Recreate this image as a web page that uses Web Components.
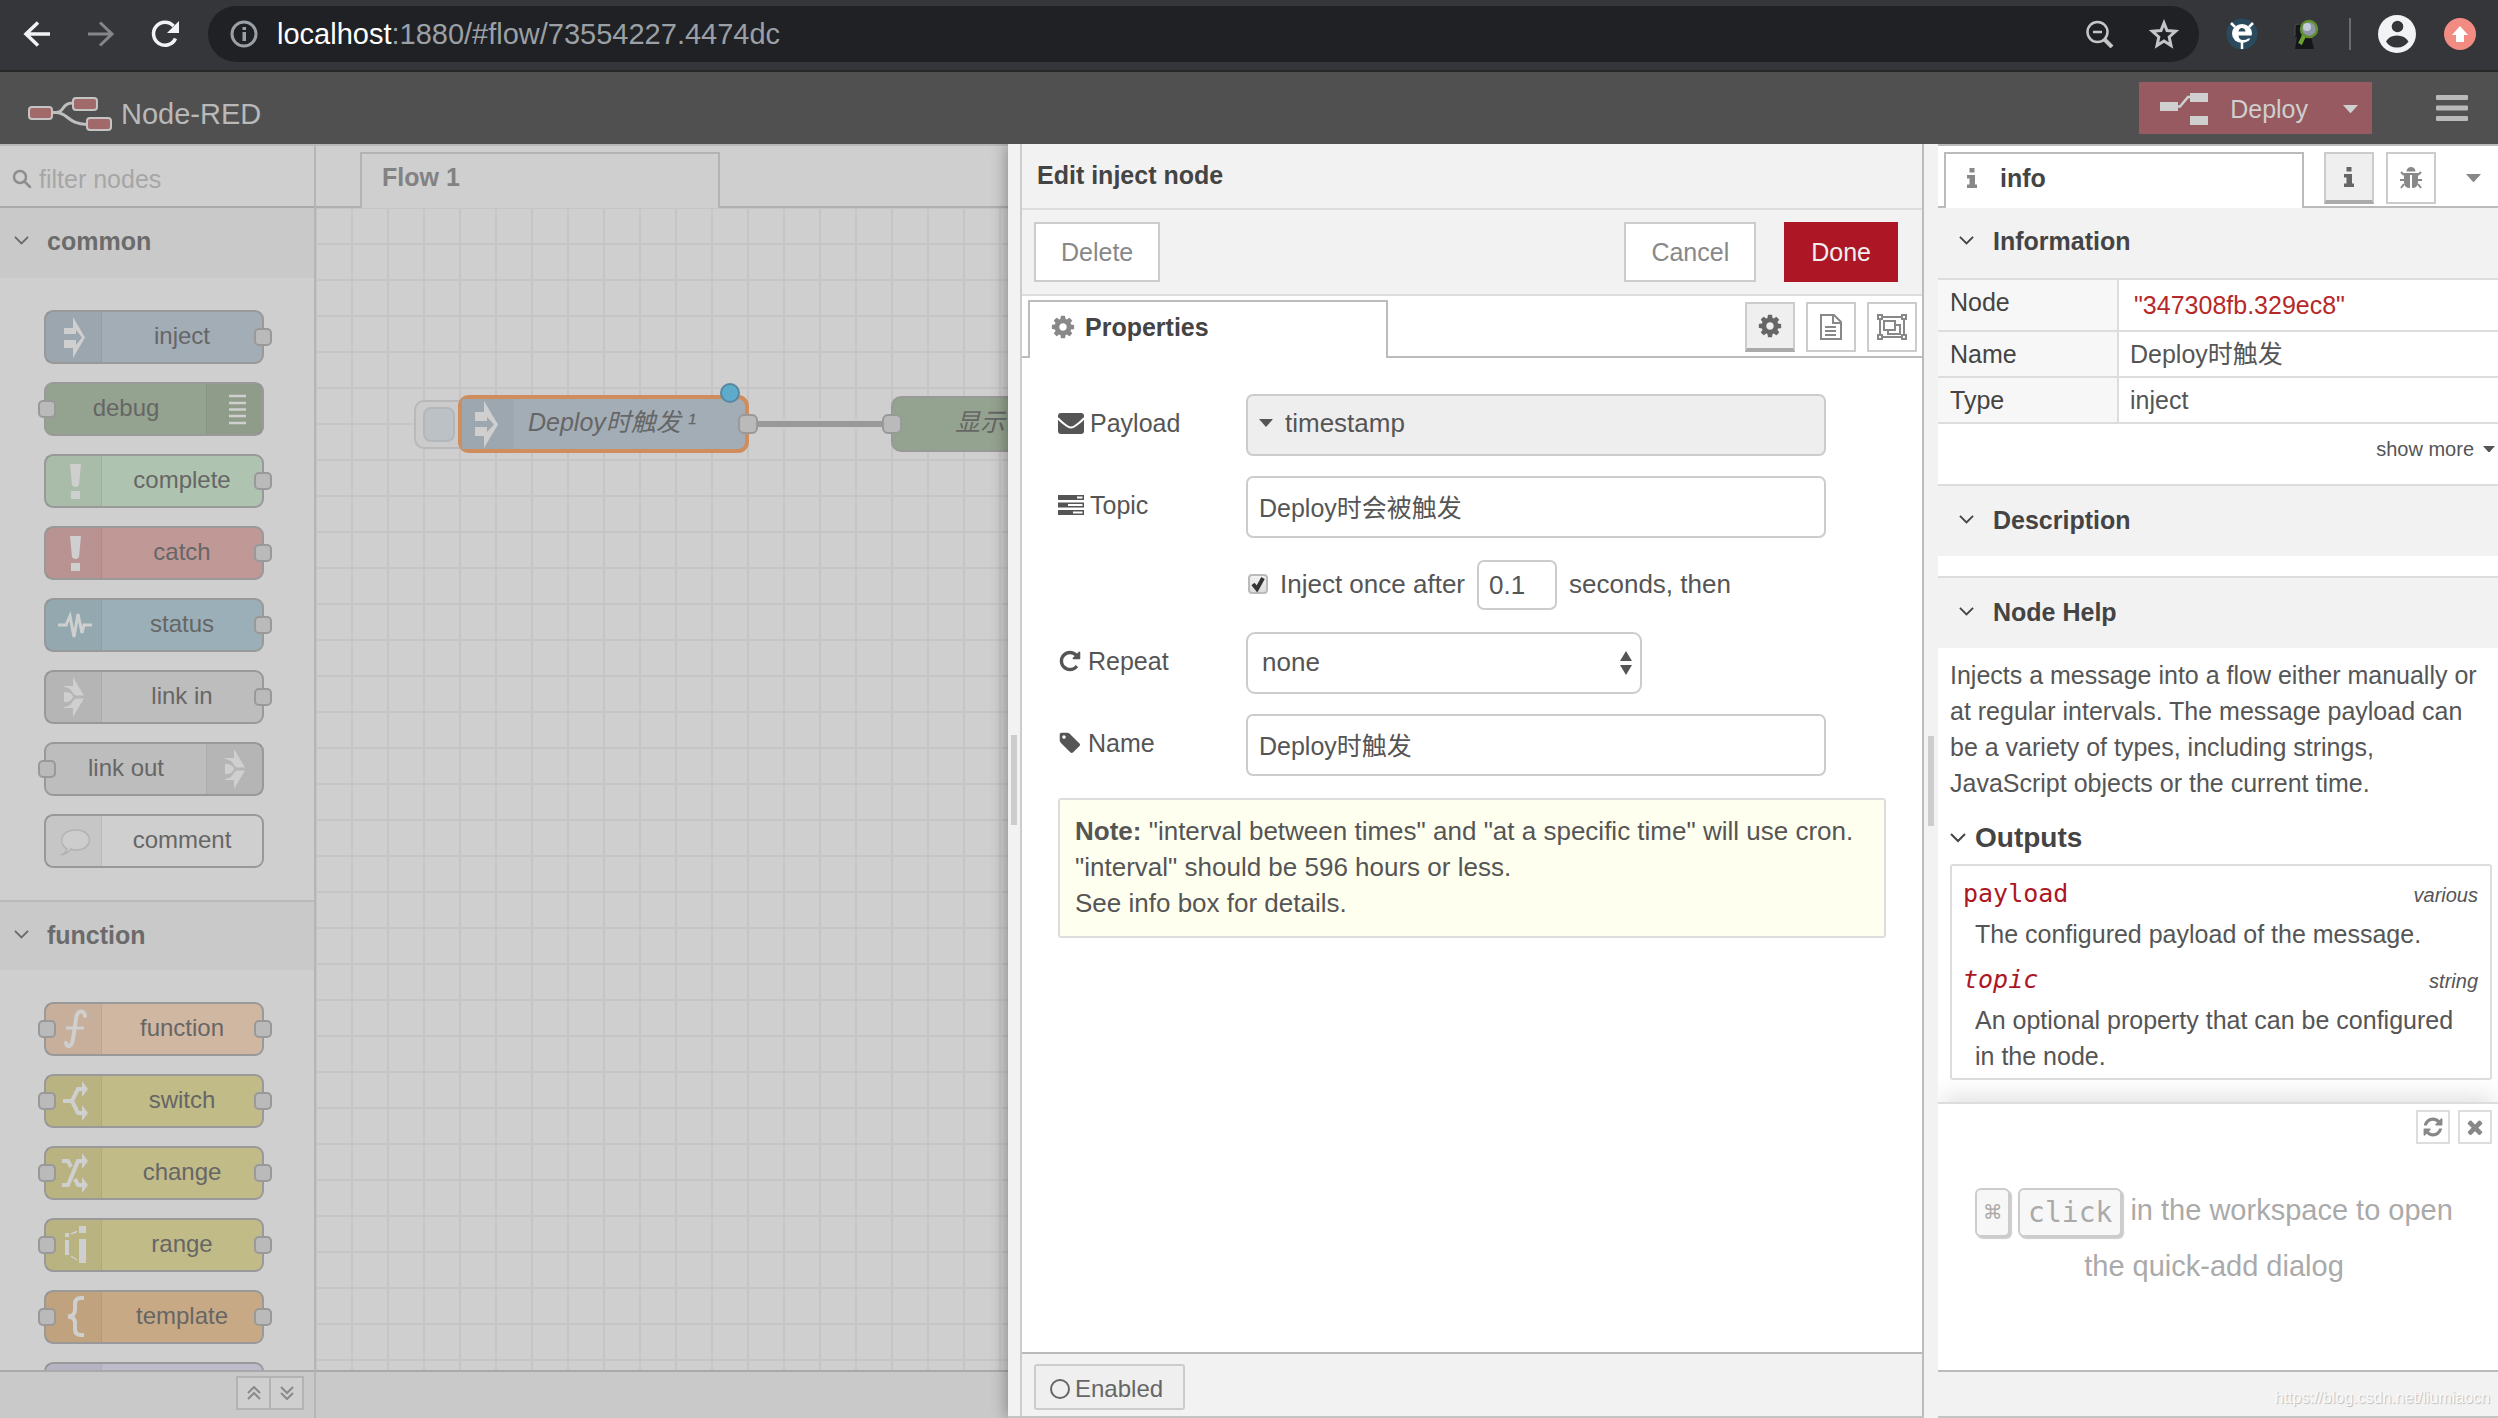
<!DOCTYPE html>
<html lang="en">
<head>
<meta charset="utf-8">
<title>Node-RED</title>
<style>
html,body{margin:0;height:100%}
body{font:25px/36px "Liberation Sans","Noto Sans CJK SC",sans-serif;color:#555;overflow:hidden}
red-app{height:100vh}
</style>
</head>
<body>
<red-app></red-app>
<script>
const base = `*{box-sizing:border-box}button,input,select{font:inherit;color:inherit;margin:0}button{cursor:pointer;padding:0}svg{display:block}`;
function define(name, css, html, setup) {
  const t = document.createElement('template');
  t.innerHTML = `<style>${base}${css}</style>${html}`;
  customElements.define(name, class extends HTMLElement {
    constructor() { super(); this.attachShadow({mode: 'open'}).append(t.content.cloneNode(true)); }
    connectedCallback() { if (setup) setup(this, this.shadowRoot); }
  });
}

/* ---------- icons ---------- */
const fa = d => ['0 0 1792 1792', `<path fill="currentColor" d="${d}"/>`];
const icons = {
  cog: fa('M1152 896q0-106-75-181t-181-75-181 75-75 181 75 181 181 75 181-75 75-181zm512-109v222q0 12-8 23t-20 13l-185 28q-19 54-39 91 35 50 107 138 10 12 10 25t-9 23q-27 37-99 108t-94 71q-12 0-26-9l-138-108q-44 23-91 38-16 136-29 186-7 28-36 28h-222q-14 0-24.5-8.5t-11.5-21.5l-28-184q-49-16-90-37l-141 107q-10 9-25 9-14 0-25-11-126-114-165-168-7-10-7-23 0-12 8-23 15-21 51-66.5t54-70.5q-27-50-41-99l-183-27q-13-2-21-12.5t-8-23.5v-222q0-12 8-23t19-13l186-28q14-46 39-92-40-57-107-138-10-12-10-24 0-10 9-23 26-36 98.5-107.5t94.5-71.5q13 0 26 10l138 107q44-23 91-38 16-136 29-186 7-28 36-28h222q14 0 24.5 8.5t11.5 21.5l28 184q49 16 90 37l142-107q9-9 24-9 13 0 25 10 129 119 165 170 7 8 7 22 0 12-8 23-15 21-51 66.5t-54 70.5q26 50 41 98l183 28q13 2 21 12.5t8 23.5z'),
  repeat: fa('M1664 256v448q0 26-19 45t-45 19h-448q-42 0-59-40-17-39 14-69l138-138q-148-137-349-137-104 0-198.5 40.5t-163.5 109.5-109.5 163.5-40.5 198.5 40.5 198.5 109.5 163.5 163.5 109.5 198.5 40.5q119 0 225-52t179-147q7-10 23-12 15 0 25 9l137 138q9 8 9.5 20.5t-7.5 22.5q-109 132-264 204.5t-327 72.5q-156 0-298-61t-245-164-164-245-61-298 61-298 164-245 245-164 298-61q147 0 284.5 55.5t244.5 156.5l130-129q29-31 70-14 39 17 39 59z'),
  refresh: fa('M1639 1056q0 5-1 7-64 268-268 434.5t-478 166.5q-146 0-282.5-55t-243.5-157l-129 129q-19 19-45 19t-45-19-19-45v-448q0-26 19-45t45-19h448q26 0 45 19t19 45-19 45l-137 137q71 66 161 102t187 36q134 0 250-65t186-179q11-17 53-117 8-23 30-23h192q13 0 22.5 9.5t9.5 22.5zm25-800v448q0 26-19 45t-45 19h-448q-26 0-45-19t-19-45 19-45l138-138q-148-137-349-137-134 0-250 65t-186 179q-11 17-53 117-8 23-30 23h-199q-13 0-22.5-9.5t-9.5-22.5v-7q65-268 270-434.5t480-166.5q146 0 284 55.5t245 156.5l130-129q19-19 45-19t45 19 19 45z'),
  times: fa('M1490 1322q0 40-28 68l-136 136q-28 28-68 28t-68-28l-294-294-294 294q-28 28-68 28t-68-28l-136-136q-28-28-28-68t28-68l294-294-294-294q-28-28-28-68t28-68l136-136q28-28 68-28t68 28l294 294 294-294q28-28 68-28t68 28l136 136q28 28 28 68t-28 68l-294 294 294 294q28 28 28 68z'),
  tag: fa('M576 448q0-53-37.5-90.5t-90.5-37.5-90.5 37.5-37.5 90.5 37.5 90.5 90.5 37.5 90.5-37.5 37.5-90.5zm1067 576q0 53-37 90l-491 492q-39 37-91 37-53 0-90-37l-715-716q-38-37-64.5-101t-26.5-117v-416q0-52 38-90t90-38h416q53 0 117 26.5t102 64.5l715 714q37 39 37 91z'),
  envelope: ['0 0 26 22', '<path fill="currentColor" d="M3 1h20q3 0 3 3v15q0 3-3 3H3q-3 0-3-3V4q0-3 3-3z"/><path fill="none" stroke="#fff" stroke-width="2" d="M0 6q2 3 9 8 4 3 8 0 7-5 9-8"/>'],
  tasks: ['0 0 26 22', '<path fill="currentColor" fill-rule="evenodd" d="M0 1h26v5H0zM19 2.500h5.500v2H19zM0 8.500h26v5H0zM10 10h14.500v2H10zM0 16h26v5H0zM15 17.500h9.500v2H15z"/>'],
  search: ['0 0 20 20', '<path fill="none" stroke="currentColor" stroke-width="2.500" stroke-linecap="round" d="M14 8A6 6 0 1 1 2 8a6 6 0 0 1 12 0zM13 13l5 5"/>'],
  chevron: ['0 0 16 10', '<path fill="none" stroke="currentColor" stroke-width="2" d="M1 1l7 7 7-7"/>'],
  caret: ['0 0 16 9', '<path fill="currentColor" d="M0 0h16l-8 9z"/>'],
  updown: ['0 0 12 24', '<path fill="currentColor" d="M0 10h12L6 0zM0 14h12l-6 10z"/>'],
  info: ['0 0 10 20', '<path fill="currentColor" d="M2.500 0h5v4.500h-5zM0 7h8v9.500h2V20H0v-3.500h2.500V10.500H0z"/>'],
  bug: ['0 0 24 24', '<g fill="none" stroke="currentColor" stroke-width="2"><path d="M5 9L2 6M19 9l3-3M1 14h5M18 14h5M5 18l-3 4M19 18l3 4"/></g><path fill="currentColor" d="M7.500 5.500a4.500 4.500 0 0 1 9 0zM5 7h14v9q0 6-6 6V9h-2v13q-6 0-6-6z"/>'],
  file: ['0 0 22 26', '<path fill="none" stroke="currentColor" stroke-width="2" d="M1 1h13l7 7v17H1zM13 1v8h8M5 13h11M5 17h11M5 21h11"/>'],
  group: ['0 0 30 26', '<g fill="none" stroke="currentColor" stroke-width="2"><path d="M3 3h24v20H3zM7 7h11v9H7zM18 11h5v9H11v-4"/></g><g fill="#fff" stroke="currentColor" stroke-width="2"><path d="M1 1h4v4H1zM25 1h4v4h-4zM1 21h4v4H1zM25 21h4v4h-4z"/></g>'],
  circle: ['0 0 22 22', '<circle cx="11" cy="11" r="9" fill="none" stroke="currentColor" stroke-width="2"/>'],
  up2: ['0 0 14 14', '<path fill="none" stroke="currentColor" stroke-width="2" d="M1 7l6-6 6 6M1 13l6-6 6 6"/>'],
  down2: ['0 0 14 14', '<path fill="none" stroke="currentColor" stroke-width="2" d="M1 1l6 6 6-6M1 7l6 6 6-6"/>'],
  tick: ['0 0 20 20', '<path fill="none" stroke="#333" stroke-width="4" d="M5 10l4 5 6-11"/>'],
  back: ['0 0 32 32', '<path fill="none" stroke="currentColor" stroke-width="3.500" d="M29 16H5M17 4.500L5 16l12 11.500"/>'],
  fwd: ['0 0 32 32', '<path fill="none" stroke="currentColor" stroke-width="3" d="M3 16h24M15 4.500L27 16 15 27.500"/>'],
  reload: ['0 0 32 32', '<path fill="none" stroke="currentColor" stroke-width="3.500" d="M26.500 20.500A11.500 11.500 0 1 1 24.500 8"/><path fill="currentColor" d="M30 3v12H18z"/>'],
  site: ['0 0 28 28', '<circle cx="14" cy="14" r="12" fill="none" stroke="currentColor" stroke-width="3"/><path fill="currentColor" d="M12.500 7h3.500v3h-3.500zM12.500 12h3.500v9h-3.500z"/>'],
  zoomout: ['0 0 28 28', '<path fill="none" stroke="currentColor" stroke-width="2.500" d="M21.500 12A10 10 0 1 1 1.500 12a10 10 0 0 1 20 0zM7 12h9"/><path stroke="currentColor" stroke-width="4" d="M18 19l8 8"/>'],
  star: ['0 0 30 30', '<path fill="none" stroke="currentColor" stroke-width="3" d="M15 4l3 7.500 8.500.8-6.300 5.700 1.800 8.500-7-4.500-7 4.500 1.800-8.500-6.300-5.700 8.500-.8z"/>'],
  exte: ['0 0 32 32', '<circle cx="16" cy="16" r="15.500" fill="#2a4a5d"/><ellipse cx="16" cy="15.500" rx="10" ry="9.500" fill="#fff"/><path fill="#2a4a5d" d="M12.500 13.500q.5-3.500 3.500-3.500t3.500 3.500zM12.500 17.500H27v3h-5q-1.500 1.500-5 1.500-4 0-4.500-4.500z"/><path stroke="#fff" stroke-width="2.500" d="M9 9L5 5M23 9l4-4M16 22v9"/>'],
  extm: ['0 0 32 32', '<path fill="#15161a" d="M7 19h14l3 12H5zM5 7h6v12H5z"/><path fill="none" stroke="#4b4c50" stroke-width="1" d="M5 18V9q0-3 3-3"/><circle cx="19" cy="11" r="8" fill="#8d96a8" stroke="#5f8f2a" stroke-width="2.500"/><circle cx="17" cy="9" r="4" fill="#c3cbd8"/><path stroke="#6ba32d" stroke-width="4" d="M14 18l-4 8"/>'],
  avatar: ['0 0 38 38', '<circle cx="19" cy="19" r="19" fill="#f1f3f4"/><circle cx="19.500" cy="11.500" r="5.800" fill="#35363a"/><path fill="#35363a" d="M8 26.500q3-6 11-6t11.500 6q-4 6-11.500 6t-11-6z"/>'],
  update: ['0 0 32 32', '<circle cx="16" cy="16" r="16" fill="#f28b82"/><path fill="#fff" d="M16 8l8 9h-4v7h-8v-7H8z"/>'],
  logo: ['0 0 84 34', '<g fill="none" stroke="#bfbfbf" stroke-width="3"><path d="M24 15.500h4c9 0 5-9.500 17-9.500M28 15.500c12 0 12 12 31 12"/></g><g fill="#a2696a" stroke="#c4c4c4" stroke-width="2"><rect x="1" y="10" width="23" height="12" rx="3"/><rect x="45" y="1" width="24" height="12" rx="3"/><rect x="59" y="21" width="24" height="12" rx="3"/></g>'],
  deploy: ['0 0 48 32', '<path fill="#cfcfcf" d="M0 9h18v9H0zM30 0h18v9H30zM30 23h18v9H30z"/><path fill="none" stroke="#cfcfcf" stroke-width="2.500" d="M18 13.500h2L28 4h3"/>'],
  menu: ['0 0 32 26', '<g fill="#b9b9b9"><rect width="32" height="5" rx="1"/><rect y="10.500" width="32" height="5" rx="1"/><rect y="21" width="32" height="5" rx="1"/></g>'],
  /* node type icons, drawn in the 56 x 50 strip of a palette node */
  inject: ['0 0 56 50', '<path fill="currentColor" fill-rule="evenodd" d="M18 16h9V5l12 20.500L27 46V36h-9v-8h12v5l6-7.500-6-7.500v4H18z"/>'],
  debug: ['0 0 56 50', '<path stroke="currentColor" stroke-width="2.500" d="M22 12h17M22 19h17M22 25.500h17M22 32h17M22 39h17"/>'],
  bang: ['0 0 56 50', '<path fill="currentColor" d="M24 8h11l-2 21q-1 2-3.500 2T26 29zM25 35h9v8h-9z"/>'],
  status: ['0 0 56 50', '<path fill="none" stroke="currentColor" stroke-width="3" d="M12 25h8l4-9 4 21 4-23 4 19 2-8h8"/>'],
  link: ['0 0 56 50', '<path fill="currentColor" d="M27 5l11 18.500h-7q-3 0-5-4-2-4-8-4.500V14h9zM27 45l11-18.500h-7q-3 0-5 4-2 4-8 4.500v1h9zM18 20q8 0 9 5-1 5-9 5z"/>'],
  comment: ['0 0 56 50', '<path fill="#cdcdcd" stroke="#b3b3b3" stroke-width="1.500" d="M21 33c-9-5-7-19 9-19 18 0 18 20 0 20q-3 0-5-1-4 5-10 6 5-2 6-6z"/>'],
  func: ['0 0 56 50', '<path fill="none" stroke="currentColor" stroke-width="4" stroke-linecap="round" d="M39 12c0-6-8-7-9 3l-3 20c-1 8-6 9-7 4"/><path stroke="currentColor" stroke-width="3" d="M20 24h18"/>'],
  switch: ['0 0 56 50', '<path fill="none" stroke="currentColor" stroke-width="4" d="M17 25h9l6-12h5M26 25l6 12h5"/><path fill="currentColor" d="M36 5l6 8-6 8zM36 29l6 8-6 8z"/>'],
  change: ['0 0 56 50', '<path fill="none" stroke="currentColor" stroke-width="4" d="M16 37h6l10-24h5M16 13h6l3 6M29 31l3 6h5"/><path fill="currentColor" d="M36 5l6 8-6 8zM36 29l6 8-6 8z"/>'],
  range: ['0 0 56 50', '<path fill="currentColor" d="M19 13h4v4h-4zM19 20h4v15h-4zM33 6h7v7h-7zM33 19h7v24h-7z"/><path stroke="currentColor" stroke-width="1.500" d="M25 14l6-2.500M25 36l6 4"/>'],
  brace: ['0 0 56 50', '<path fill="none" stroke="currentColor" stroke-width="4" d="M38 6h-3q-6 0-6 6v6q0 6-7 6.500 7 .5 7 6.500v6q0 6 6 6h3"/>'],
  blank: ['0 0 56 50', '']
};
define('red-icon', `:host{display:inline-block;flex:none;width:24px}svg{width:100%}`, `<svg aria-hidden="true"></svg>`, (el, root) => {
  const [box, body] = icons[el.getAttribute('name')];
  const svg = root.querySelector('svg');
  svg.setAttribute('viewBox', box);
  svg.innerHTML = body;
  const w = el.getAttribute('size');
  if (w) el.style.width = w + 'px';
});

/* ---------- browser chrome ---------- */
define('browser-bar', `
:host{display:flex;align-items:center;height:72px;background:#35363a;border-bottom:2px solid #282828;color:#e8eaed;padding:0 22px 2px 21px;gap:27px}
nav{display:flex;gap:32px}
nav button{display:flex;background:none;border:0;color:#f1f3f4}
nav button:disabled{color:#85868a}
.url{flex:1;display:flex;align-items:center;height:56px;border-radius:28px;background:#202124;padding:0 20px 0 22px;gap:35px}
.addr{display:flex;align-items:center;gap:19px;flex:1;font-size:29px;color:#9aa0a6}
.addr b{font-weight:400;color:#fff}
.url>red-icon{color:#c4c5c7}
.ext{display:flex;align-items:center;gap:32px}
.user{display:flex;align-items:center;gap:28px}
i{width:2px;height:32px;background:#6a6b6f}
`, `<nav><button aria-label="Back"><red-icon name="back" size="32"></red-icon></button><button aria-label="Forward" disabled><red-icon name="fwd" size="32"></red-icon></button><button aria-label="Reload"><red-icon name="reload" size="32"></red-icon></button></nav>
<div class="url"><div class="addr"><red-icon name="site" size="28"></red-icon><span><b>localhost</b>:1880/#flow/73554227.4474dc</span></div><red-icon name="zoomout" size="28"></red-icon><red-icon name="star" size="30"></red-icon></div>
<div class="ext"><red-icon name="exte" size="32"></red-icon><red-icon name="extm" size="32"></red-icon></div><i></i><div class="user"><red-icon name="avatar" size="38"></red-icon><red-icon name="update" size="32"></red-icon></div>`);

/* ---------- application header ---------- */
define('red-header', `
:host{display:flex;align-items:center;justify-content:space-between;height:72px;background:#505050;padding:0 30px 0 28px;position:relative;z-index:3}
.brand{display:flex;align-items:center;gap:9px;padding-top:12px;font-size:29px;color:#b9b9b9}
.right{display:flex;align-items:center;gap:64px}
.deploy{display:flex;background:#965a60;color:#cfcfcf}
.deploy button{display:flex;align-items:center;height:52px;border:0;background:none;padding:2px 14px 0 21px;gap:22px}
.menu{display:flex;border:0;background:none}
`, `<div class="brand"><red-icon name="logo" size="84"></red-icon><span>Node-RED</span></div>
<div class="right"><div class="deploy"><button><red-icon name="deploy" size="48"></red-icon><span>Deploy</span></button><button aria-label="Deploy options"><red-icon name="caret" size="15"></red-icon></button></div>
<button class="menu" aria-label="Menu"><red-icon name="menu" size="32"></red-icon></button></div>`);

/* ---------- palette ---------- */
define('palette-node', `
:host{display:flex;position:relative;width:220px;height:54px;border:2px solid #999;border-radius:9px;color:#cfcfcf;background:var(--tone)}
.ic{display:flex;width:56px;background:rgba(0,0,0,.04);border-right:1px solid rgba(0,0,0,.05)}
.lb{flex:1;display:flex;align-items:center;justify-content:center;font-size:24px;color:#666;padding-bottom:2px}
:host([flip]){flex-direction:row-reverse}
:host([flip]) .ic{border-right:0;border-left:1px solid rgba(0,0,0,.05)}
.p{position:absolute;top:16px;width:18px;height:18px;border:2px solid #999;border-radius:5px;background:#bababa;display:none}
.in{left:-8px}.out{right:-10px}
:host([in]) .in,:host([out]) .out{display:block}
`, `<span class="ic"></span><span class="lb"><slot></slot></span><span class="p in"></span><span class="p out"></span>`, (el, root) => {
  el.style.setProperty('--tone', el.getAttribute('tone'));
  root.querySelector('.ic').innerHTML = `<red-icon name="${el.getAttribute('icon')}" size="56"></red-icon>`;
});

define('palette-category', `
:host{display:block}
:host(:not(:first-of-type)){border-top:2px solid #bababa}
button{display:flex;align-items:center;gap:18px;width:100%;height:70px;border:0;background:#c9c9c9;color:#6b6b6b;font-weight:700;padding:0 14px 4px}
:host(:not(:first-of-type)) button{height:68px;padding-bottom:2px}
.nodes{display:flex;flex-direction:column;gap:18px;padding:32px 44px}
`, `<button><red-icon name="chevron" size="15"></red-icon><slot name="title"></slot></button><div class="nodes"><slot></slot></div>`);

define('red-palette', `
:host{display:flex;flex-direction:column;width:316px;border-right:2px solid #b5b5b5;border-top:2px solid #b8b8b8;background:#cfcfcf}
label{display:flex;align-items:center;gap:7px;height:62px;padding:5px 12px 0;border-bottom:2px solid #a9a9a9;color:#8e8e8e}
input{flex:1;min-width:0;border:0;background:none;outline:0;padding:0;height:36px}
input::placeholder{color:#a6a6a6;opacity:1}
.list{flex:1;overflow:hidden;min-height:0}
footer{display:flex;justify-content:flex-end;padding:4px 10px 6px;height:48px;background:#c9c9c9;border-top:2px solid #a9a9a9}
footer button{display:flex;align-items:center;justify-content:center;width:35px;height:34px;border:2px solid #b3b3b3;background:#cfcfcf;color:#8a8a8a}
footer button+button{margin-left:-2px}
`, `<label><red-icon name="search" size="20"></red-icon><input placeholder="filter nodes" aria-label="filter nodes"></label>
<div class="list">
<palette-category><span slot="title">common</span>
<palette-node icon="inject" tone="#a3adb6" out>inject</palette-node>
<palette-node icon="debug" tone="#94a38f" flip in>debug</palette-node>
<palette-node icon="bang" tone="#afc4b0" out>complete</palette-node>
<palette-node icon="bang" tone="#c09997" out>catch</palette-node>
<palette-node icon="status" tone="#9aafb7" out>status</palette-node>
<palette-node icon="link" tone="#bdbdbd" out>link in</palette-node>
<palette-node icon="link" tone="#bdbdbd" flip in>link out</palette-node>
<palette-node icon="comment" tone="#cfcfcf">comment</palette-node>
</palette-category>
<palette-category><span slot="title">function</span>
<palette-node icon="func" tone="#d0b7a2" in out>function</palette-node>
<palette-node icon="switch" tone="#c1bb88" in out>switch</palette-node>
<palette-node icon="change" tone="#c1bb88" in out>change</palette-node>
<palette-node icon="range" tone="#c1bb88" in out>range</palette-node>
<palette-node icon="brace" tone="#c8a985" in out>template</palette-node>
<palette-node icon="blank" tone="#bebccb"></palette-node>
</palette-category>
</div>
<footer><button aria-label="Collapse all"><red-icon name="up2" size="14"></red-icon></button><button aria-label="Expand all"><red-icon name="down2" size="14"></red-icon></button></footer>`);

/* ---------- workspace ---------- */
define('red-workspace', `
:host{display:flex;flex-direction:column;flex:1;min-width:0;border-top:2px solid #b8b8b8;background:#cfcfcf}
.tabs{display:flex;height:62px;padding-top:6px}
.tabs::before{content:"";width:44px;border-bottom:2px solid #b0b0b0}
.tabs::after{content:"";flex:1;border-bottom:2px solid #b0b0b0}
.tab{width:360px;border:2px solid #b3b3b3;border-bottom:0;background:#cfcfcf;color:#828282;font-weight:700;text-align:left;padding:0 20px 8px}
svg{flex:1;min-height:0;width:100%}
text{font-style:italic;fill:#666}
footer{height:48px;background:#c9c9c9;border-top:2px solid #a9a9a9}
`, `<div class="tabs"><button class="tab">Flow 1</button></div>
<svg>
<defs><pattern id="grid" width="36" height="36" patternUnits="userSpaceOnUse"><path d="M0 0h36v1H1v35H0zM35 1h1v35h-1zM1 35h35v1H1z" fill="#c5c5c5"/></pattern></defs>
<rect width="100%" height="100%" fill="url(#grid)"/>
<path d="M441 216h127" stroke="#cfcfcf" stroke-width="11"/><path d="M441 216h127" stroke="#999" stroke-width="6"/>
<rect x="99" y="193" width="60" height="47" rx="9" fill="#cbcbcb" stroke="#b9b9b9" stroke-width="2"/>
<rect x="108" y="200" width="30" height="33" rx="7" fill="#bcc1c5" stroke="#b3b7ba" stroke-width="2"/>
<rect x="144" y="189" width="287" height="54" rx="9" fill="#a3adb6" stroke="#cf8c5c" stroke-width="4"/>
<path d="M146 191h52v50h-52z" fill="#9da7b0"/>
<path fill="#cfcfcf" fill-rule="evenodd" d="M159 204h9v-11l14 23.500-14 23.500v-12h-9v-9h12v5l7-7.500-7-7.500v4h-12z"/>
<text x="212" y="223">Deploy时触发 ¹</text>
<rect x="576" y="189" width="220" height="54" rx="9" fill="#94a38f" stroke="#999" stroke-width="2"/>
<text x="639" y="223">显示</text>
<rect x="423" y="207" width="18" height="18" rx="5" fill="#bababa" stroke="#999" stroke-width="2"/>
<rect x="567" y="207" width="18" height="18" rx="5" fill="#bababa" stroke="#999" stroke-width="2"/>
<circle cx="414" cy="185" r="9" fill="#5fabcb" stroke="#5887a0" stroke-width="2"/>
</svg><footer></footer>`);

/* ---------- edit tray ---------- */
define('edit-tray', `
:host{display:flex;width:916px;flex:none;position:relative;z-index:1;background:#fff;border-right:2px solid #bbb;border-bottom:2px solid #c4c4c4;box-shadow:0 0 16px rgba(0,0,0,.4)}
.handle{width:14px;background:#f2f2f2;border-right:2px solid #ccc;display:flex;align-items:center;padding:0 3px}
.handle i{width:6px;height:90px;background:#ccc}
.main{flex:1;display:flex;flex-direction:column;min-width:0}
header{height:66px;background:#f2f2f2;border-bottom:2px solid #ddd;padding:13px 15px;font-weight:700;color:#444}
.bar{display:flex;align-items:center;height:86px;background:#f2f2f2;border-bottom:2px solid #ddd;padding:0 24px 0 12px;gap:28px}
.bar button{height:60px;border:2px solid #ccc;background:#fff;color:#888;padding:0 25px}
.bar .del{margin-right:auto}
.bar .ok{background:#ad1625;border-color:#ad1625;color:#eee}
.tabs{display:flex;height:62px;padding-top:4px}
.tabs::before{content:"";width:6px;border-bottom:2px solid #bbb}
.tab{flex:none;display:flex;align-items:center;gap:9px;width:360px;border:2px solid #bbb;border-bottom:0;background:#fff;color:#444;font-weight:700;padding:0 20px 6px}
.tab red-icon{color:#888}
.tools{flex:1;display:flex;justify-content:flex-end;gap:11px;padding:2px 5px 0 0;border-bottom:2px solid #bbb}
.tools button{display:flex;align-items:center;justify-content:center;width:50px;height:50px;border:2px solid #ccc;background:#fff;color:#888}
.tools .on{background:#efefef;border-bottom:4px solid #aaa;color:#666}
form{flex:1;padding:36px;display:flex;flex-direction:column;gap:20px;font-size:26px}
.row{display:flex;align-items:center;height:62px}
.row>.l{display:flex;align-items:center;gap:6px;width:188px;padding-bottom:4px;font-size:25px}
.f{width:580px;height:62px;border:2px solid #ccc;border-radius:7px;background:#fff;padding:0 11px 2px;outline:0}
input.f{font-size:25px}
button.f{display:flex;align-items:center;gap:12px;background:#eee;padding-bottom:4px}
.once{height:54px;padding-left:190px}
.once label,.once>span{padding-bottom:2px}
.ck{display:grid;margin-right:12px}
.ck>*{grid-area:1/1}
.ck input{appearance:none;width:20px;height:20px;border:2px solid #bbb;border-radius:4px;background:linear-gradient(#f2f2f2,#ddd)}
.ck red-icon{pointer-events:none}
.num{width:80px;height:50px;border:2px solid #ccc;border-radius:7px;padding:0 10px;margin:0 12px;outline:0}
.sel{display:grid;width:396px;align-items:center}
.sel>*{grid-area:1/1}
.sel select{appearance:none;width:100%;border-radius:9px;padding:0 14px 2px}
.sel red-icon{justify-self:end;margin-right:10px;pointer-events:none}
.note{margin:2px 0 0;width:828px;border:2px solid #ddd;border-radius:3px;background:#fffff0;padding:13px 15px 15px}
footer{height:64px;background:#f2f2f2;border-top:2px solid #bbb;padding:10px 12px}
footer button{display:flex;align-items:center;gap:4px;height:46px;border:2px solid #ccc;border-radius:3px;background:#efefef;color:#666;padding:4px 20px 0 13px;font-size:24px}
`, `<div class="handle"><i></i></div><div class="main">
<header>Edit inject node</header>
<div class="bar"><button class="del">Delete</button><button>Cancel</button><button class="ok">Done</button></div>
<div class="tabs"><button class="tab"><red-icon name="cog" size="26"></red-icon>Properties</button><div class="tools"><button class="on" aria-label="Properties"><red-icon name="cog" size="26"></red-icon></button><button aria-label="Description"><red-icon name="file" size="22"></red-icon></button><button aria-label="Appearance"><red-icon name="group" size="30"></red-icon></button></div></div>
<form>
<div class="row"><label class="l" for="payload"><red-icon name="envelope" size="26"></red-icon>Payload</label><button type="button" class="f" id="payload"><red-icon name="caret" size="14"></red-icon>timestamp</button></div>
<div class="row"><label class="l" for="topic"><red-icon name="tasks" size="26"></red-icon>Topic</label><input class="f" id="topic" value="Deploy时会被触发"></div>
<div class="row once"><span class="ck"><input type="checkbox" id="once" checked><red-icon name="tick" size="20"></red-icon></span><label for="once">Inject once after</label><input class="num" aria-label="Delay in seconds" value="0.1"><span>seconds, then</span></div>
<div class="row"><label class="l" for="repeat"><red-icon name="repeat" size="24"></red-icon>Repeat</label><span class="sel"><select class="f" id="repeat"><option>none</option></select><red-icon name="updown" size="12"></red-icon></span></div>
<div class="row"><label class="l" for="name"><red-icon name="tag" size="24"></red-icon>Name</label><input class="f" id="name" value="Deploy时触发"></div>
<p class="note"><b>Note:</b> "interval between times" and "at a specific time" will use cron.<br>"interval" should be 596 hours or less.<br>See info box for details.</p>
</form>
<footer><button><red-icon name="circle" size="22"></red-icon>Enabled</button></footer></div>`);

/* ---------- sidebar ---------- */
define('side-section', `
:host{display:block}
button{display:flex;align-items:center;gap:19px;width:100%;height:70px;border:0;background:#f2f2f2;color:#444;font-weight:700;padding:0 21px 4px}
:host([ruled]) button{height:72px;border-top:2px solid #ddd;padding-bottom:3px}
`, `<button><red-icon name="chevron" size="15"></red-icon><slot name="title"></slot></button><slot></slot>`);

define('red-sidebar', `
:host{display:flex;width:574px;flex:none;position:relative;z-index:2;background:#f2f2f2}
.handle{width:14px;display:flex;align-items:center;padding:0 4px}
.handle i{width:6px;height:90px;background:#ccc}
.main{flex:1;display:flex;flex-direction:column;min-width:0;overflow:hidden;border-top:2px solid #bbb;background:#fff}
.tabs{display:flex;height:62px;padding-top:6px}
.tabs::before{content:"";width:6px;border-bottom:2px solid #bbb}
.tab{flex:none;display:flex;align-items:center;gap:23px;width:360px;border:2px solid #bbb;border-bottom:0;background:#fff;color:#444;font-weight:700;padding:0 21px 6px}
.tab red-icon{color:#888}
.tools{flex:1;display:flex;gap:12px;padding-left:20px;border-bottom:2px solid #bbb}
.tools button{display:flex;align-items:center;justify-content:center;width:50px;height:52px;border:2px solid #ccc;background:#fff;color:#888}
.tools .on{background:#efefef;border-bottom:4px solid #aaa;color:#666}
.tools .more{border:0;margin-left:auto}
.body{flex:1;min-height:0;overflow:hidden}
table{width:100%;border-collapse:collapse;border-top:2px solid #ddd}
th,td{border-bottom:2px solid #ddd;text-align:left;vertical-align:top;font-weight:400;padding:4px 11px}
th{width:180px;color:#444;background:#f7f7f7;border-right:2px solid #ddd;padding-left:12px}
.id{color:#b72828;padding:7px 15px}
.show{display:flex;justify-content:flex-end;height:60px;padding:7px 0}
.show button{display:flex;align-items:center;gap:9px;border:0;background:none;font-size:20px;height:36px;padding-right:3px}
.gap{height:20px}
.help{padding:9px 6px 0 12px}
p{margin:0}
h3{display:flex;align-items:center;gap:9px;margin:19px 0 8px;font-size:28px;line-height:36px;color:#444}
dl{margin:0;border:2px solid #ddd;border-radius:3px;padding:0 12px 4px 11px}
dt{display:flex;justify-content:space-between;align-items:baseline;height:36px;margin-top:10px;font-family:"DejaVu Sans Mono",monospace;color:#ad1625}
dt em{font:italic 20px/36px "Liberation Sans",sans-serif;color:#555}
dd{margin:4px 0 0 12px}
.opt{font-style:italic}
.tips{height:268px;background:#fff;border-top:2px solid #ddd;box-shadow:0 -8px 24px -4px rgba(0,0,0,.14);position:relative;text-align:center;font-size:29px;line-height:56px;color:#aaa;padding:6px}
.tips .btns{display:flex;justify-content:flex-end;gap:8px}
.tips .btns button{display:flex;align-items:center;justify-content:center;width:34px;height:34px;border:2px solid #ddd;background:#fff;color:#888}
.tips p{margin:38px 14px 0 6px}
kbd{display:inline-block;vertical-align:middle;height:49px;line-height:45px;font-family:"DejaVu Sans Mono","DejaVu Sans",monospace;font-size:28px;border:2px solid #ccc;border-radius:6px;background:#f7f7f7;box-shadow:2px 2px 1px #ccc;padding:0 8px}
kbd.k{padding:0 7px}
footer{position:relative;height:46px;background:#f2f2f2;border-top:2px solid #bbb;display:flex;justify-content:flex-end;align-items:center;padding:8px 8px 0;font-size:16px;line-height:20px;color:#fafafa;text-shadow:1px 1px 1px #bbb}
.end{position:relative;height:2px;background:#c4c4c4}
`, `<div class="handle"><i></i></div><div class="main">
<div class="tabs"><button class="tab"><red-icon name="info" size="10"></red-icon>info</button><div class="tools"><button class="on" aria-label="Information"><red-icon name="info" size="10"></red-icon></button><button aria-label="Debug messages"><red-icon name="bug" size="24"></red-icon></button><button class="more" aria-label="More tabs"><red-icon name="caret" size="15"></red-icon></button></div></div>
<div class="body">
<side-section><span slot="title">Information</span>
<table><tr><th>Node</th><td class="id">"347308fb.329ec8"</td></tr><tr><th>Name</th><td>Deploy时触发</td></tr><tr><th>Type</th><td>inject</td></tr></table>
<div class="show"><button>show more <red-icon name="caret" size="12"></red-icon></button></div></side-section>
<side-section ruled><span slot="title">Description</span><div class="gap"></div></side-section>
<side-section ruled><span slot="title">Node Help</span>
<div class="help"><p>Injects a message into a flow either manually or at regular intervals. The message payload can be a variety of types, including strings, JavaScript objects or the current time.</p>
<h3><red-icon name="chevron" size="16"></red-icon>Outputs</h3>
<dl><dt>payload<em>various</em></dt><dd>The configured payload of the message.</dd><dt><span class="opt">topic</span><em>string</em></dt><dd>An optional property that can be configured in the node.</dd></dl></div></side-section>
</div>
<div class="tips"><div class="btns"><button aria-label="Next tip"><red-icon name="refresh" size="22"></red-icon></button><button aria-label="Close tips"><red-icon name="times" size="22"></red-icon></button></div>
<p><kbd class="k">⌘</kbd> <kbd>click</kbd> <span>in the workspace to open</span><br><span>the quick-add dialog</span></p></div>
<footer>https://blog.csdn.net/liumiaocn</footer><div class="end"></div></div>`);

define('red-app', `
:host{display:flex;flex-direction:column}
main{flex:1;display:flex;min-height:0}
`, `<browser-bar></browser-bar><red-header></red-header><main><red-palette></red-palette><red-workspace></red-workspace><edit-tray></edit-tray><red-sidebar></red-sidebar></main>`);
</script>
</body>
</html>
